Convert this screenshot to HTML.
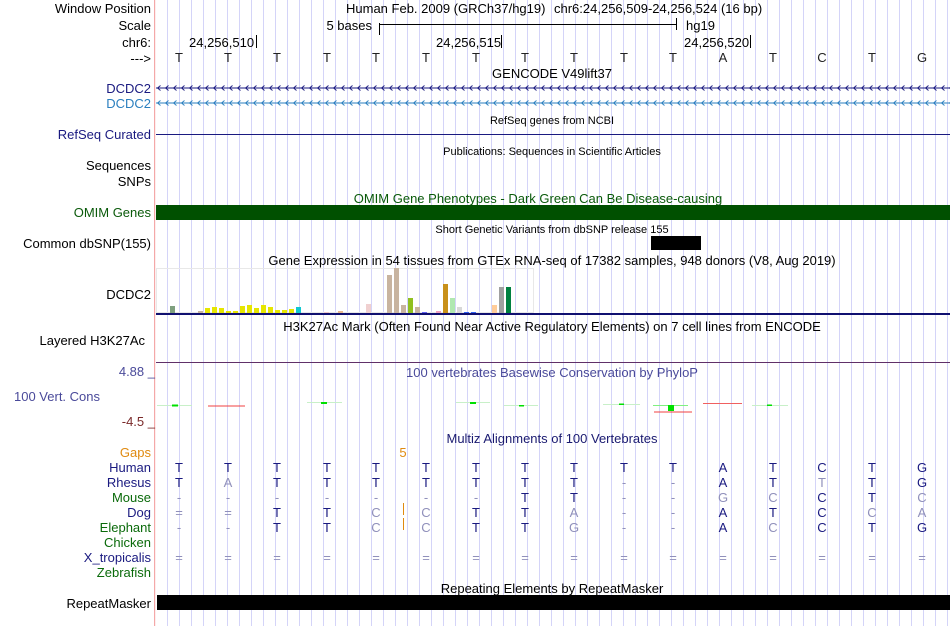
<!DOCTYPE html>
<html><head><meta charset="utf-8"><style>
html,body{margin:0;padding:0;background:#fff;}
svg{display:block;font-family:"Liberation Sans",sans-serif;}
</style></head><body>
<svg width="950" height="626" xmlns="http://www.w3.org/2000/svg">
<defs>
<pattern id="grid" x="167" y="0" width="12" height="626" patternUnits="userSpaceOnUse">
<rect x="0" y="0" width="1" height="626" fill="#d4d4f8"/>
</pattern>
<pattern id="arr1" x="156" y="84" width="8" height="8" patternUnits="userSpaceOnUse">
<path d="M4.5 1.5 L1.5 4 L4.5 6.5" stroke="#1a1a80" fill="none" stroke-width="0.9"/>
</pattern>
<pattern id="arr2" x="156" y="99" width="8" height="8" patternUnits="userSpaceOnUse">
<path d="M4.5 1.5 L1.5 4 L4.5 6.5" stroke="#2a7fbf" fill="none" stroke-width="0.9"/>
</pattern>
</defs>
<rect x="156" y="0" width="794" height="626" fill="url(#grid)"/>
<rect x="154" y="0" width="1.2" height="626" fill="#f4a8a8"/>

<g font-size="13" text-anchor="end" fill="#000">
<text x="151" y="13">Window Position</text>
<text x="151" y="30">Scale</text>
<text x="151" y="47">chr6:</text>
<text x="151" y="63">---&gt;</text>
<text x="151" y="93" fill="#1a1a80">DCDC2</text>
<text x="151" y="108" fill="#2a7fbf">DCDC2</text>
<text x="151" y="139" fill="#1a1a80">RefSeq Curated</text>
<text x="151" y="170">Sequences</text>
<text x="151" y="186">SNPs</text>
<text x="151" y="217" fill="#0a5a0a">OMIM Genes</text>
<text x="151" y="248">Common dbSNP(155)</text>
<text x="151" y="299">DCDC2</text>
<text x="145" y="345">Layered H3K27Ac</text>
<text x="155" y="376" fill="#4a4a9a">4.88 _</text>
<text x="100" y="401" fill="#4a4a9a">100 Vert. Cons</text>
<text x="155" y="426" fill="#7a2a2a">-4.5 _</text>
<text x="151" y="457" fill="#e08a10">Gaps</text>
<text x="151" y="472" fill="#1a1a80">Human</text>
<text x="151" y="487" fill="#1a1a80">Rhesus</text>
<text x="151" y="502" fill="#0a6a0a">Mouse</text>
<text x="151" y="517" fill="#1a1a80">Dog</text>
<text x="151" y="532" fill="#0a6a0a">Elephant</text>
<text x="151" y="547" fill="#0a6a0a">Chicken</text>
<text x="151" y="562" fill="#1a1a80">X_tropicalis</text>
<text x="151" y="577" fill="#0a6a0a">Zebrafish</text>
<text x="151" y="608">RepeatMasker</text>
</g>

<g font-size="13" fill="#000">
<text x="346" y="13">Human Feb. 2009 (GRCh37/hg19)</text>
<text x="554" y="13">chr6:24,256,509-24,256,524 (16 bp)</text>
<text x="372" y="30" text-anchor="end">5 bases</text>
<rect x="379" y="23" width="1" height="12"/><rect x="379" y="24" width="297" height="1"/><rect x="676" y="18" width="1" height="12"/>
<text x="686" y="30">hg19</text>
<text x="189" y="47">24,256,510</text><rect x="256" y="35" width="1" height="13"/>
<text x="436" y="47">24,256,515</text><rect x="501" y="35" width="1" height="13"/>
<text x="684" y="47">24,256,520</text><rect x="750" y="35" width="1" height="13"/>
</g>
<g font-size="13" fill="#222" text-anchor="middle">
<text x="179" y="62">T</text><text x="228" y="62">T</text><text x="277" y="62">T</text><text x="327" y="62">T</text><text x="376" y="62">T</text><text x="426" y="62">T</text><text x="476" y="62">T</text><text x="525" y="62">T</text><text x="574" y="62">T</text><text x="624" y="62">T</text><text x="673" y="62">T</text><text x="723" y="62">A</text><text x="773" y="62">T</text><text x="822" y="62">C</text><text x="872" y="62">T</text><text x="922" y="62">G</text>
</g>

<text x="552" y="78" font-size="13" text-anchor="middle">GENCODE V49lift37</text>
<rect x="156" y="84" width="794" height="8" fill="url(#arr1)"/>
<rect x="156" y="87.5" width="794" height="1" fill="#1a1a80"/>
<rect x="156" y="99" width="794" height="8" fill="url(#arr2)"/>
<rect x="156" y="102.5" width="794" height="1" fill="#2a7fbf"/>

<text x="552" y="124" font-size="11" text-anchor="middle">RefSeq genes from NCBI</text>
<rect x="156" y="134" width="794" height="1" fill="#1a1a80"/>
<text x="552" y="155" font-size="11" text-anchor="middle">Publications: Sequences in Scientific Articles</text>
<text x="538" y="203" font-size="13" text-anchor="middle" fill="#0a5a0a">OMIM Gene Phenotypes - Dark Green Can Be Disease-causing</text>
<rect x="156" y="205" width="794" height="15" fill="#005000"/>
<text x="552" y="233" font-size="11" text-anchor="middle">Short Genetic Variants from dbSNP release 155</text>
<rect x="651" y="236" width="50" height="14" fill="#000"/>

<text x="552" y="265" font-size="13" text-anchor="middle">Gene Expression in 54 tissues from GTEx RNA-seq of 17382 samples, 948 donors (V8, Aug 2019)</text>
<rect x="156.5" y="268.5" width="377" height="44" fill="none" stroke="#e8e8e8"/>
<g>
<rect x="170" y="306" width="5" height="7" fill="#7fa07f"/>
<rect x="198" y="311" width="5" height="2" fill="#c8b4a0"/>
<rect x="205" y="308" width="5" height="5" fill="#e6e600"/>
<rect x="212" y="307" width="5" height="6" fill="#e6e600"/>
<rect x="219" y="308" width="5" height="5" fill="#e6e600"/>
<rect x="226" y="311" width="5" height="2" fill="#e6e600"/>
<rect x="233" y="311" width="5" height="2" fill="#e6e600"/>
<rect x="240" y="306" width="5" height="7" fill="#e6e600"/>
<rect x="247" y="305" width="5" height="8" fill="#e6e600"/>
<rect x="254" y="308" width="5" height="5" fill="#e6e600"/>
<rect x="261" y="305" width="5" height="8" fill="#e6e600"/>
<rect x="268" y="307" width="5" height="6" fill="#e6e600"/>
<rect x="275" y="310" width="5" height="3" fill="#e6e600"/>
<rect x="282" y="310" width="5" height="3" fill="#e6e600"/>
<rect x="289" y="309" width="5" height="4" fill="#e6e600"/>
<rect x="296" y="307" width="5" height="6" fill="#10c8d0"/>
<rect x="324" y="312" width="5" height="1" fill="#f0c8c8"/>
<rect x="338" y="311" width="5" height="2" fill="#e8b890"/>
<rect x="366" y="304" width="5" height="9" fill="#f0d0d0"/>
<rect x="387" y="275" width="5" height="38" fill="#c8b4a0"/>
<rect x="394" y="268" width="5" height="45" fill="#c8b4a0"/>
<rect x="401" y="305" width="5" height="8" fill="#c8b4a0"/>
<rect x="408" y="298" width="5" height="15" fill="#90c020"/>
<rect x="415" y="307" width="5" height="6" fill="#c8b4a0"/>
<rect x="422" y="312" width="5" height="1" fill="#6060f0"/>
<rect x="436" y="311" width="5" height="2" fill="#f0a0c0"/>
<rect x="443" y="284" width="5" height="29" fill="#c8901a"/>
<rect x="450" y="298" width="5" height="15" fill="#b0e8b0"/>
<rect x="457" y="307" width="5" height="6" fill="#d8d8d8"/>
<rect x="464" y="312" width="5" height="1" fill="#3060f0"/>
<rect x="471" y="312" width="5" height="1" fill="#3060f0"/>
<rect x="492" y="305" width="5" height="8" fill="#ffcc99"/>
<rect x="499" y="287" width="5" height="26" fill="#a0a0a0"/>
<rect x="506" y="287" width="5" height="26" fill="#008040"/>
</g>
<rect x="156" y="313" width="794" height="2" fill="#101070"/>

<text x="552" y="331" font-size="13" text-anchor="middle">H3K27Ac Mark (Often Found Near Active Regulatory Elements) on 7 cell lines from ENCODE</text>
<rect x="156" y="362" width="794" height="1" fill="#603068"/>

<text x="552" y="377" font-size="13" text-anchor="middle" fill="#4a4a9a">100 vertebrates Basewise Conservation by PhyloP</text>
<g>
<rect x="157" y="405" width="35" height="1" fill="#c8f0c8"/><rect x="172" y="404.5" width="6" height="2" fill="#00e000"/>
<rect x="208" y="405.5" width="37" height="1" fill="#f04040"/>
<rect x="307" y="402" width="35" height="1" fill="#c8f0c8"/><rect x="321" y="402" width="6" height="2" fill="#00e000"/>
<rect x="456" y="402" width="34" height="1" fill="#c8f0c8"/><rect x="470" y="402" width="6" height="2" fill="#00e000"/>
<rect x="504" y="405" width="34" height="1" fill="#c8f0c8"/><rect x="519" y="405" width="5" height="1.5" fill="#00e000"/>
<rect x="603" y="404" width="37" height="1" fill="#c8f0c8"/><rect x="619" y="403.5" width="5" height="1.5" fill="#00e000"/>
<rect x="653" y="405" width="35" height="1" fill="#80f080"/><rect x="668" y="405" width="6" height="6" fill="#00e000"/>
<rect x="654" y="411.5" width="38" height="1" fill="#f04040"/>
<rect x="703" y="403" width="39" height="1" fill="#f06060"/>
<rect x="752" y="405" width="36" height="1" fill="#c8f0c8"/><rect x="767" y="404.5" width="5" height="1.5" fill="#00e000"/>
</g>

<text x="552" y="443" font-size="13" text-anchor="middle" fill="#1a1a70">Multiz Alignments of 100 Vertebrates</text>
<text x="403" y="457" font-size="13" text-anchor="middle" fill="#e08a10">5</text>
<rect x="403" y="503" width="1" height="12" fill="#e08a10"/>
<rect x="403" y="518" width="1" height="12" fill="#e08a10"/>
<g font-size="13" text-anchor="middle" fill="#1a1a80">
<g transform="translate(0,472)"><text x="179">T</text><text x="228">T</text><text x="277">T</text><text x="327">T</text><text x="376">T</text><text x="426">T</text><text x="476">T</text><text x="525">T</text><text x="574">T</text><text x="624">T</text><text x="673">T</text><text x="723">A</text><text x="773">T</text><text x="822">C</text><text x="872">T</text><text x="922">G</text></g>
<g transform="translate(0,487)"><text x="179">T</text><text x="228" fill="#9090bb">A</text><text x="277">T</text><text x="327">T</text><text x="376">T</text><text x="426">T</text><text x="476">T</text><text x="525">T</text><text x="574">T</text><text x="624" fill="#9090bb">-</text><text x="673" fill="#9090bb">-</text><text x="723">A</text><text x="773">T</text><text x="822" fill="#9090bb">T</text><text x="872">T</text><text x="922">G</text></g>
<g transform="translate(0,502)" fill="#9090bb"><text x="179">-</text><text x="228">-</text><text x="277">-</text><text x="327">-</text><text x="376">-</text><text x="426">-</text><text x="476">-</text><text x="525" fill="#1a1a80">T</text><text x="574" fill="#1a1a80">T</text><text x="624">-</text><text x="673">-</text><text x="723">G</text><text x="773">C</text><text x="822" fill="#1a1a80">C</text><text x="872" fill="#1a1a80">T</text><text x="922">C</text></g>
<g transform="translate(0,517)" fill="#9090bb"><text x="179">=</text><text x="228">=</text><text x="277" fill="#1a1a80">T</text><text x="327" fill="#1a1a80">T</text><text x="376">C</text><text x="426">C</text><text x="476" fill="#1a1a80">T</text><text x="525" fill="#1a1a80">T</text><text x="574">A</text><text x="624">-</text><text x="673">-</text><text x="723" fill="#1a1a80">A</text><text x="773" fill="#1a1a80">T</text><text x="822" fill="#1a1a80">C</text><text x="872">C</text><text x="922">A</text></g>
<g transform="translate(0,532)" fill="#9090bb"><text x="179">-</text><text x="228">-</text><text x="277" fill="#1a1a80">T</text><text x="327" fill="#1a1a80">T</text><text x="376">C</text><text x="426">C</text><text x="476" fill="#1a1a80">T</text><text x="525" fill="#1a1a80">T</text><text x="574">G</text><text x="624">-</text><text x="673">-</text><text x="723" fill="#1a1a80">A</text><text x="773">C</text><text x="822" fill="#1a1a80">C</text><text x="872" fill="#1a1a80">T</text><text x="922" fill="#1a1a80">G</text></g>
<g transform="translate(0,562)" fill="#9090bb"><text x="179">=</text><text x="228">=</text><text x="277">=</text><text x="327">=</text><text x="376">=</text><text x="426">=</text><text x="476">=</text><text x="525">=</text><text x="574">=</text><text x="624">=</text><text x="673">=</text><text x="723">=</text><text x="773">=</text><text x="822">=</text><text x="872">=</text><text x="922">=</text></g>
</g>

<text x="552" y="593" font-size="13" text-anchor="middle">Repeating Elements by RepeatMasker</text>
<rect x="157" y="595" width="793" height="15" fill="#000"/>
</svg>
</body></html>
